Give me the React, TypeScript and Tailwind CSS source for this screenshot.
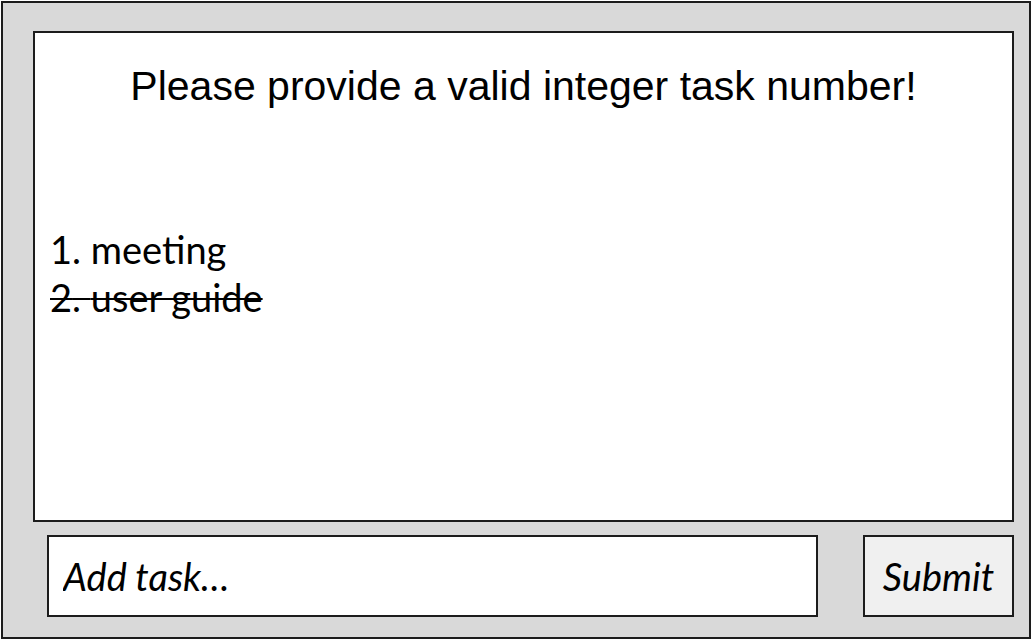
export default function App() {
  const tasks = [
    { n: 1, text: "meeting", done: false },
    { n: 2, text: "user guide", done: true },
  ];
  return (
    <div className="h-[640px] w-[1036px] bg-white pl-px pt-px">
      <div className="flex h-[638px] w-[1030px] flex-col border-2 border-[#1c1c1c] bg-[#d9d9d9] pb-[19px] pl-[30px] pr-[15px] pt-[28px]">
        <div className="flex h-[491px] flex-col border-2 border-[#1c1c1c] bg-white pt-[33px]">
          <div className="text-center font-['Liberation_Sans',Arial,sans-serif] text-[41px] leading-[41px] text-black">
            Please provide a valid integer task number!
          </div>
          <ul className="mt-[118px] pl-[15px] font-['Lato','Open_Sans',sans-serif] text-[38px] leading-[48px] text-black">
            {tasks.map((t) => (
              <li key={t.n} className={t.done ? "line-through decoration-2" : ""}>
                {t.n}. {t.text}
              </li>
            ))}
          </ul>
        </div>
        <div className="mt-[13px] flex h-[82px] items-stretch">
          <input
            type="text"
            placeholder="Add task…"
            className="ml-[14px] w-[771px] border-2 border-[#1c1c1c] bg-white px-[14px] font-['Lato',sans-serif] text-[38px] italic text-black outline-none placeholder:text-black"
          />
          <button
            type="button"
            className="ml-auto w-[151px] border-2 border-[#1c1c1c] bg-[#f0f0f0] font-['Lato',sans-serif] text-[38px] italic text-black"
          >
            Submit
          </button>
        </div>
      </div>
    </div>
  );
}
